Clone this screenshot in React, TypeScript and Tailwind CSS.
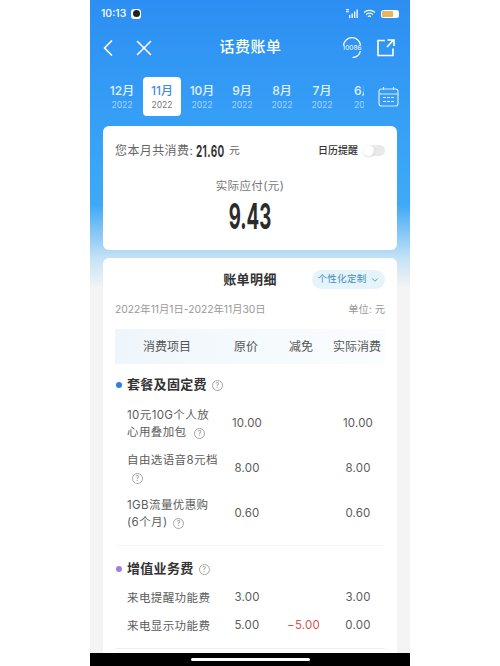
import { ChevronDown, ChevronLeft, X } from "lucide-react";

const sans = "font-['Inter','Noto_Sans_CJK_SC',sans-serif]";

const months = [
  ["12月", "2022"],
  ["11月", "2022"],
  ["10月", "2022"],
  ["9月", "2022"],
  ["8月", "2022"],
  ["7月", "2022"],
];

function Help({ className = "" }: { className?: string }) {
  return (
    <span
      className={`inline-flex h-[11px] w-[11px] items-center justify-center rounded-full border border-[#a5a5a5] text-[7px] leading-none text-[#8a8a8a] ${className}`}
    >
      ?
    </span>
  );
}

function Row({
  name,
  price,
  off,
  paid,
  tall,
}: {
  name: React.ReactNode;
  price: string;
  off?: string;
  paid: string;
  tall?: boolean;
}) {
  return (
    <div className={`flex items-center ${tall ? "h-[45px]" : "h-[28px]"}`}>
      <div className="w-[107px] pl-[12px] text-[11.5px] leading-[17px] tracking-[0.4px] text-[#5c5c5c]">{name}</div>
      <div className="w-[50px] text-center text-[11.5px] tracking-[0.2px] text-[#5c5c5c]">{price}</div>
      <div className="w-[60px] pl-[3px] text-center text-[11.5px] tracking-[0.2px] text-[#d9534f]">{off}</div>
      <div className="w-[52px] text-center text-[11.5px] tracking-[0.2px] text-[#5c5c5c]">{paid}</div>
    </div>
  );
}

export default function App() {
  return (
    <div className={`h-[666px] w-[500px] overflow-hidden bg-white ${sans}`}>
      <div className="mx-auto flex h-full w-[320px] flex-col bg-[linear-gradient(180deg,#2c8ef2_0px,#3aa6f7_170px,#3fa9f6_205px,#c4e2f5_258px,#f4f4f4_288px)]">
        <div className="flex h-[27px] shrink-0 items-center justify-between px-[11px] text-white">
          <div className="flex items-center gap-[5px]">
            <span className="text-[10.5px] font-medium">10:13</span>
            <span className="flex h-[10px] w-[10px] items-center justify-center rounded-[3px] bg-white">
              <span className="h-[7px] w-[7px] rounded-full bg-[#222]" />
            </span>
          </div>
          <div className="flex items-center gap-[5px]">
            <svg width="12" height="9" viewBox="0 0 12 9" fill="white">
              <rect x="0" y="0" width="3" height="1.2" />
              <rect x="0" y="2" width="3" height="1.2" />
              <rect x="3" y="6" width="1.3" height="3" />
              <rect x="5.5" y="4.5" width="1.3" height="4.5" />
              <rect x="8" y="2.5" width="1.3" height="6.5" />
              <rect x="10.5" y="0.5" width="1.3" height="8.5" />
            </svg>
            <svg width="13" height="10" viewBox="0 0 13 10" fill="none" stroke="white" strokeWidth="1.2">
              <path d="M1 3.5a8 8 0 0 1 11 0M3 5.6a5 5 0 0 1 7 0M5 7.6a2.2 2.2 0 0 1 3 0" />
            </svg>
            <span className="flex h-[8px] w-[18px] items-center rounded-[2.5px] bg-white p-[1px]">
              <span className="h-full w-[11px] rounded-[1px] bg-[#e6b75e]" />
            </span>
          </div>
        </div>

        <div className="relative flex h-[41px] shrink-0 items-center pr-[14px] pl-[4px] text-white">
          <ChevronLeft size={28} strokeWidth={1.5} />
          <X size={26} strokeWidth={1.4} className="ml-[9px]" />
          <span className="flex-1 pl-[4px] text-center text-[15px] font-medium tracking-[0.5px]">话费账单</span>
          <svg width="24" height="24" viewBox="0 0 24 24" fill="none" stroke="white" strokeWidth="1.2" className="mr-[12px]">
            <path d="M3.5 9a8.6 8.6 0 0 1 17 0M20.5 15a8.6 8.6 0 0 1-8 6.5" />
            <text x="12" y="14" textAnchor="middle" fontSize="6.5" fill="white" stroke="none">
              10086
            </text>
          </svg>
          <svg width="20" height="20" viewBox="0 0 20 20" fill="none" stroke="white" strokeWidth="1.6">
            <path d="M9 2.5H2v15h15v-7M11 9l6-6.5M11.5 2H18v6" />
          </svg>
        </div>

        <div className="mt-[9px] flex h-[39px] shrink-0 items-stretch pl-[12px]">
          {months.map(([m, y], i) => (
            <div key={m} className="flex w-[40px] justify-center">
              <div
                className={`flex w-[38px] flex-col items-center justify-center ${
                  i === 1 ? "rounded-[4px] bg-white" : ""
                }`}
              >
                <span className={`text-[12px] font-medium leading-[16px] ${i === 1 ? "text-[#3f8fcf]" : "text-white/85"}`}>{m}</span>
                <span className={`text-[8.5px] leading-[12px] ${i === 1 ? "text-[#777]" : "text-white/55"}`}>{y}</span>
              </div>
            </div>
          ))}
          <div className="ml-[12px] flex w-[10px] flex-col justify-center overflow-hidden">
            <span className="text-[12px] font-medium leading-[16px] whitespace-nowrap text-white/85">6月</span>
            <span className="text-[8.5px] leading-[12px] text-white/55">2022</span>
          </div>
          <div className="flex flex-1 items-center justify-end pr-[11px]">
            <svg width="21" height="22" viewBox="0 0 21 22" fill="none" stroke="#d6ecfb" strokeWidth="1.2">
              <rect x="1" y="3" width="19" height="17" rx="2.5" />
              <path d="M1 8h19M5.5 1v3M15.5 1v3M5 11.5h3M9 11.5h3M13 11.5h3M5 15.5h3M9 15.5h3M13 15.5h3" />
            </svg>
          </div>
        </div>

        <div className="mx-[13px] mt-[10px] h-[124px] shrink-0 rounded-[6px] bg-white px-[12px] pt-[12px]">
          <div className="flex h-[25px] items-center justify-between">
            <div className="flex items-center text-[12px] tracking-[0.4px] text-[#666]">
              您本月共消费:
              <span className="ml-[3px] inline-block w-[30px] origin-left scale-x-[0.62] text-[16px] font-bold tracking-[0.6px] text-[#333]">
                21.60
              </span>
              <span className="ml-[3px] text-[10.5px]">元</span>
            </div>
            <div className="flex items-center gap-[5px]">
              <span className="text-[10px] font-medium text-[#333]">日历提醒</span>
              <span className="flex h-[11px] w-[22px] items-center rounded-full bg-[#e9e9e9]">
                <span className="h-[11px] w-[11px] rounded-full bg-white shadow-sm" />
              </span>
            </div>
          </div>
          <div className="mt-[15px] text-center text-[11.5px] leading-[17px] tracking-[0.4px] text-[#777]">实际应付(元)</div>
          <div className="mt-[2px] scale-x-[0.52] text-center text-[36px] leading-[38px] font-bold text-[#2b2b2b]">9.43</div>
        </div>

        <div className="mx-[13px] mt-[8px] flex-1 rounded-t-[6px] bg-white">
          <div className="relative flex h-[42px] items-center justify-center pt-[2px]">
            <span className="text-[13px] font-bold tracking-[0.4px] text-[#333]">账单明细</span>
            <span className="absolute top-[12px] right-[12px] flex h-[19px] w-[73px] items-center justify-center gap-[3px] rounded-full bg-[#e6f3fb] text-[9.5px] tracking-[0.3px] text-[#3f8fc0]">
              个性化定制
              <ChevronDown size={10} />
            </span>
          </div>
          <div className="flex h-[20px] items-center justify-between px-[12px] text-[10.3px] text-[#999]">
            <span>2022年11月1日-2022年11月30日</span>
            <span>单位: 元</span>
          </div>
          <div className="mx-[12px] mt-[9px] flex h-[35px] items-center bg-[linear-gradient(90deg,#eff6fb,#fafdfe)] text-[12px] text-[#555]">
            <span className="w-[119px] pl-[28px] whitespace-nowrap">消费项目</span>
            <span className="w-[43px]">原价</span>
            <span className="ml-[12px] w-[32px]">减免</span>
            <span className="ml-[12px] whitespace-nowrap">实际消费</span>
          </div>

          <div className="flex h-[37px] items-center px-[13px] pt-[6px] pb-[1px]">
            <span className="h-[6px] w-[6px] rounded-full bg-[#2d7fe0]" />
            <span className="ml-[5px] text-[13px] font-bold tracking-[0.3px] text-[#333]">套餐及固定费</span>
            <Help className="ml-[5px]" />
          </div>
          <div className="px-[12px]">
            <Row
              tall
              name={
                <>
                  10元10G个人放
                  <br />
                  心用叠加包 <Help className="ml-[4px]" />
                </>
              }
              price="10.00"
              paid="10.00"
            />
            <Row
              tall
              name={
                <>
                  <span className="whitespace-nowrap">自由选语音8元档</span>
                  <br />
                  <Help className="ml-[5px]" />
                </>
              }
              price="8.00"
              paid="8.00"
            />
            <Row
              tall
              name={
                <>
                  1GB流量优惠购
                  <br />
                  (6个月) <Help className="ml-[2px]" />
                </>
              }
              price="0.60"
              paid="0.60"
            />
          </div>
          <div className="mx-[12px] mt-[9px] border-t border-[#f6f6f6]" />
          <div className="flex h-[37px] items-center px-[13px] pt-[9px]">
            <span className="h-[6px] w-[6px] rounded-full bg-[#a07fe0]" />
            <span className="ml-[5px] text-[13px] font-bold tracking-[0.3px] text-[#333]">增值业务费</span>
            <Help className="ml-[5px]" />
          </div>
          <div className="mt-[1px] px-[12px]">
            <Row name={<span className="whitespace-nowrap">来电提醒功能费</span>} price="3.00" paid="3.00" />
            <Row name={<span className="whitespace-nowrap">来电显示功能费</span>} price="5.00" off="−5.00" paid="0.00" />
          </div>
          <div className="mx-[12px] mt-[8px] border-t border-[#eeeeee]" />
        </div>

        <div className="flex h-[13px] shrink-0 items-center justify-center bg-black">
          <span className="h-[3px] w-[119px] rounded-full bg-white" />
        </div>
      </div>
    </div>
  );
}
